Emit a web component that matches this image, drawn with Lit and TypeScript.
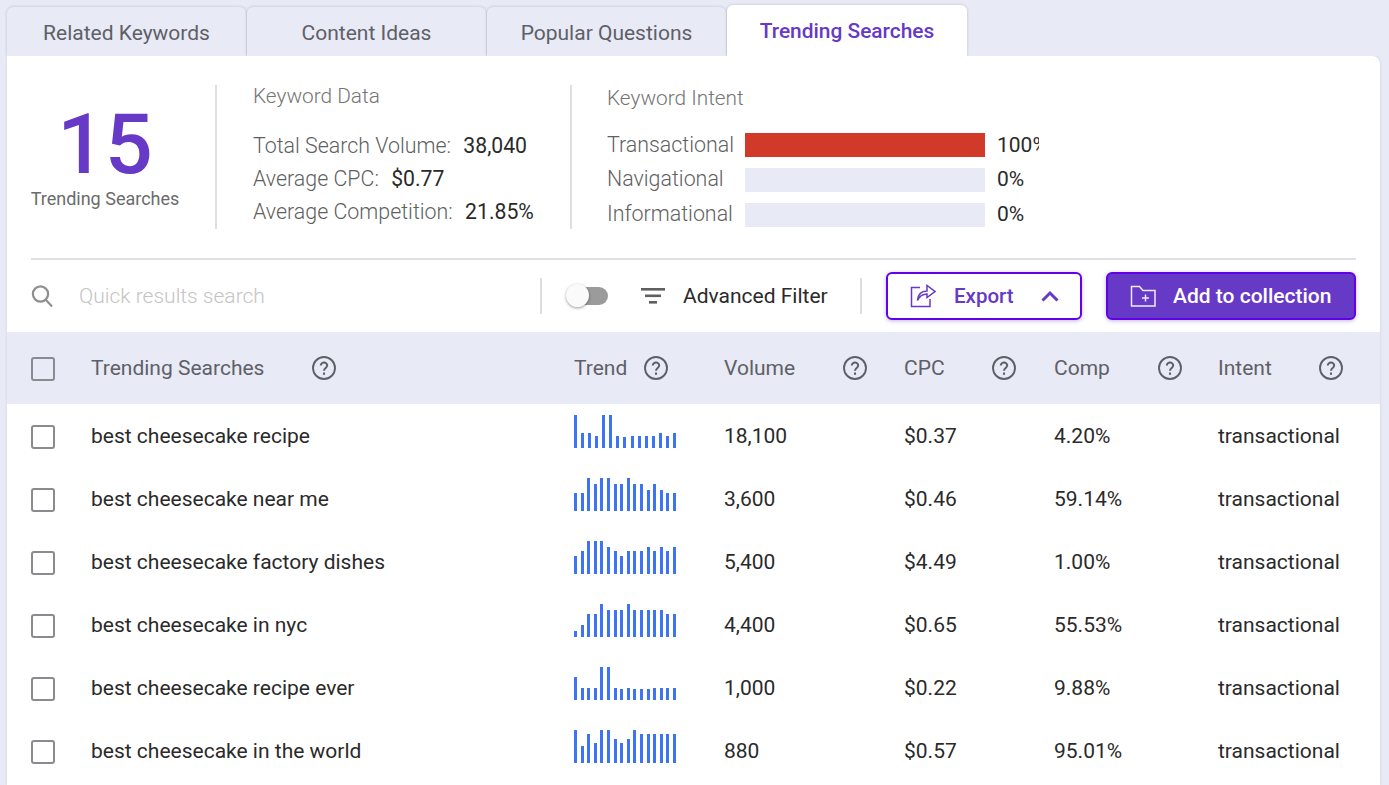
import { LitElement, html, css } from "lit";
import { customElement } from "lit/decorators.js";

const help = html`<svg class="help" viewBox="0 0 24 24" fill="none" stroke="#5f6066" stroke-width="1.9">
  <circle cx="12" cy="12" r="11"></circle>
  <path d="M8.8 9.6a3.2 3.2 0 0 1 6.4 0c0 2.4-3.2 2.500-3.2 5.200" stroke-width="2"></path>
  <path d="M12 16.500v2.300" stroke-width="2.100"></path>
</svg>`;

const rows = [
  { k: "best cheesecake recipe", v: "18,100", c: "$0.37", p: "4.20%", b: [33, 15, 15, 12, 33, 33, 12, 11, 12, 12, 12, 12, 15, 12, 15] },
  { k: "best cheesecake near me", v: "3,600", c: "$0.46", p: "59.14%", b: [18, 18, 33, 27, 33, 33, 27, 27, 33, 27, 27, 21, 27, 21, 18, 18] },
  { k: "best cheesecake factory dishes", v: "5,400", c: "$4.49", p: "1.00%", b: [18, 23, 33, 33, 33, 27, 23, 18, 23, 23, 23, 27, 23, 27, 23, 27] },
  { k: "best cheesecake in nyc", v: "4,400", c: "$0.65", p: "55.53%", b: [6, 12, 23, 23, 33, 27, 27, 27, 33, 27, 27, 27, 27, 27, 23, 23] },
  { k: "best cheesecake recipe ever", v: "1,000", c: "$0.22", p: "9.88%", b: [23, 12, 12, 12, 33, 33, 12, 11, 12, 11, 11, 11, 12, 12, 12, 12] },
  { k: "best cheesecake in the world", v: "880", c: "$0.57", p: "95.01%", b: [33, 17, 29, 20, 33, 33, 24, 20, 24, 33, 29, 29, 29, 29, 29, 29] },
];

@customElement("app-root")
export class AppRoot extends LitElement {
  static styles = css`
    :host { display: block; height: 785px; overflow: hidden; background: #e8eaf6; padding: 5px 9px 0 7px; box-sizing: border-box; font-family: Roboto, sans-serif; color: #2a2a2a; font-size: 21px; }
    .tabs { display: flex; align-items: flex-end; gap: 1px; height: 51px; }
    .tab { width: 239px; height: 49px; box-sizing: border-box; padding-top: 3px; display: flex; justify-content: center; align-items: center; background: #e8eaf6; color: #5f6066; border-radius: 6px 6px 0 0; box-shadow: 0 0 3px rgba(60,60,90,.25); clip-path: inset(-4px -4px 0 -4px); font-size: 21px; }
    .tab.on { width: 240px; height: 51px; padding-top: 0; background: #fff; color: #6639c6; font-weight: 500; font-size: 20.900px; }
    .card { background: #fff; height: 729px; border-top-right-radius: 8px; box-shadow: 0 0 3px rgba(60,60,90,.15); clip-path: inset(0 -4px 0 -4px); }
    .stats { display: flex; height: 202px; padding: 29px 24px 0 0; box-sizing: border-box; }
    .total { width: 208px; padding-right: 12px; box-sizing: border-box; height: 144px; display: flex; flex-direction: column; align-items: center; color: #6b6b6b; font-size: 18px; }
    .div { width: 2px; height: 144px; background: #dfdfdf; flex: none; }
    .num { font-size: 84px; line-height: 84px; color: #6639c6; font-weight: 500; margin-top: 18px; margin-bottom: 1px; }
    .kd { width: 281px; padding: 0 36px; height: 144px; color: #5f5f5f; flex: none; }
    .ttl { color: #757575; font-weight: 300; font-size: 20.800px; line-height: 24px; }
    .kd .ttl { margin-top: -1px; margin-bottom: 21px; }
    .sv { line-height: 33px; height: 33px; white-space: nowrap; font-weight: 300; font-size: 21.400px; }
    .sv b { font-weight: 400; color: #2a2a2a; margin-left: 7px; font-size: 21.200px; }
    .ki { padding-left: 35px; }
    .ki .ttl { margin-top: 1px; margin-bottom: 23px; }
    .ir { display: flex; align-items: center; height: 24px; margin-bottom: 10.800px; font-weight: 300; color: #5f5f5f; font-size: 21.400px; line-height: 22px; }
    .ir .l { width: 138px; margin-top: -1px; }
    .bar { width: 240px; height: 24px; background: #e8eaf6; }
    .bar.r { background: #d13a28; }
    .ir .p { margin: -1px 0 0 12px; width: 42px; overflow: hidden; white-space: nowrap; font-weight: 400; color: #2a2a2a; font-size: 21px; }
    .hr { height: 2px; background: #dfe0e4; margin: 0 24px; }
    .tool { height: 72px; display: flex; align-items: center; padding: 0 24px; box-sizing: border-box; padding-bottom: 1px; }
    .tool > * { flex: none; }
    .search { width: 22px; height: 24px; }
    .ph { margin-left: 26px; width: 461px; color: #c4c4c4; font-weight: 300; font-size: 21px; }
    .sep { width: 2px; height: 36px; background: #dcdde2; }
    .sw { margin-left: 24px; width: 42px; height: 24px; position: relative; }
    .sw i { position: absolute; left: 3px; right: 0; top: 3px; height: 18px; border-radius: 9px; background: #9b9b9b; }
    .sw u { position: absolute; left: 0; top: 0; width: 23px; height: 23px; border-radius: 50%; background: #fafafa; box-shadow: 0 1px 3px rgba(0,0,0,.4); }
    .fi { margin-left: 33px; width: 24px; height: 16px; }
    .af { margin-left: 18px; width: 177px; font-size: 21px; }
    .btn { height: 48px; box-sizing: border-box; border: 2px solid #6200ea; border-radius: 6px; display: flex; align-items: center; font-weight: 500; box-shadow: 0 1px 4px rgba(60,20,160,.3); }
    .exp { margin-left: 24px; width: 196px; color: #6639c6; background: #fff; padding-left: 22px; font-size: 20.500px; }
    .exp .ic { width: 26px; height: 24px; flex: none; }
    .exp span { margin-left: 18px; width: 87px; }
    .exp .ch { width: 18px; height: 12px; }
    .add { margin-left: 24px; width: 250px; color: #fff; background: #6639c6; padding-left: 22px; font-size: 21px; }
    .add .ic { width: 26px; height: 24px; flex: none; }
    .add span { margin-left: 17px; white-space: nowrap; }
    .thead, .row { display: flex; align-items: center; padding-left: 24px; }
    .thead { height: 72px; background: #e8eaf6; color: #5f6066; }
    .row { height: 63px; }
    .row:first-of-type { margin-top: 1px; }
    .cb { width: 24px; height: 24px; box-sizing: border-box; border: 2px solid #8a8a8f; border-radius: 3px; margin: 2px 36px 0 0; flex: none; }
    .c1 { width: 483px; } .c2 { width: 150px; } .c3 { width: 180px; } .c4 { width: 150px; } .c5 { width: 164px; } .c6 { width: 160px; }
    .cell { display: flex; align-items: center; justify-content: space-between; white-space: nowrap; flex: none; }
    .in { display: flex; align-items: center; justify-content: space-between; }
    .w1 { width: 245px; } .w2 { width: 94px; } .w3 { width: 143px; } .w4 { width: 112px; } .w5 { width: 128px; } .w6 { width: 125px; }
    .help { width: 24px; height: 24px; display: block; }
    .spark { width: 102px; height: 33px; display: flex; align-items: flex-end; justify-content: space-between; margin-top: -8px; }
    .spark i { width: 3px; background: #3d74f5; display: block; }
  `;

  render() {
    return html`
      <div class="tabs">
        <div class="tab">Related Keywords</div>
        <div class="tab">Content Ideas</div>
        <div class="tab">Popular Questions</div>
        <div class="tab on">Trending Searches</div>
      </div>
      <div class="card">
        <div class="stats">
          <div class="total"><div class="num">15</div><div>Trending Searches</div></div>
          <div class="div"></div>
          <div class="kd">
            <div class="ttl">Keyword Data</div>
            <div class="sv">Total Search Volume: <b>38,040</b></div>
            <div class="sv">Average CPC: <b>$0.77</b></div>
            <div class="sv">Average Competition: <b>21.85%</b></div>
          </div>
          <div class="div"></div>
          <div class="ki">
            <div class="ttl">Keyword Intent</div>
            <div class="ir"><div class="l">Transactional</div><div class="bar r"></div><div class="p">100%</div></div>
            <div class="ir"><div class="l">Navigational</div><div class="bar"></div><div class="p">0%</div></div>
            <div class="ir"><div class="l">Informational</div><div class="bar"></div><div class="p">0%</div></div>
          </div>
        </div>
        <div class="hr"></div>
        <div class="tool">
          <svg class="search" viewBox="0 0 22 24" fill="none" stroke="#8f8f8f" stroke-width="2.200"><circle cx="9.500" cy="10" r="7.600"></circle><path d="M15 16l6 6.500"></path></svg>
          <div class="ph">Quick results search</div>
          <div class="sep"></div>
          <div class="sw"><i></i><u></u></div>
          <svg class="fi" viewBox="0 0 24 16" fill="#5f5f5f"><rect x="0" y="0" width="24" height="2.600"></rect><rect x="4" y="6.500" width="16" height="2.600"></rect><rect x="8" y="13" width="8" height="2.600"></rect></svg>
          <div class="af">Advanced Filter</div>
          <div class="sep"></div>
          <div class="btn exp">
            <svg class="ic" viewBox="0 0 26 24" fill="none" stroke="#6639c6" stroke-width="1.500"><path d="M10 3.500H1.500v19H20V15"></path><path d="M7.500 16.500c.5-6 4-9.500 9.500-9.500V1.500L25 7.500 17 13.500V10c-5 0-7.500 2-9.500 6.500z"></path></svg>
            <span>Export</span>
            <svg class="ch" viewBox="0 0 18 12" fill="none" stroke="#6639c6" stroke-width="3"><path d="M1.500 10.500L9 3l7.500 7.500"></path></svg>
          </div>
          <div class="btn add">
            <svg class="ic" viewBox="0 0 26 24" fill="none" stroke="#f1ecfb" stroke-width="1.500"><path d="M1.500 2.500h8l3.500 4h12v15.500H1.500z"></path><path d="M15.500 10.500v7M12 14h7"></path></svg>
            <span>Add to collection</span>
          </div>
        </div>
        <div class="thead">
          <div class="cb"></div>
          <div class="cell c1"><div class="in w1">Trending Searches ${help}</div></div>
          <div class="cell c2"><div class="in w2">Trend ${help}</div></div>
          <div class="cell c3"><div class="in w3">Volume ${help}</div></div>
          <div class="cell c4"><div class="in w4">CPC ${help}</div></div>
          <div class="cell c5"><div class="in w5">Comp ${help}</div></div>
          <div class="cell c6"><div class="in w6">Intent ${help}</div></div>
        </div>
        ${rows.map(
          (r) => html`<div class="row">
            <div class="cb"></div>
            <div class="cell c1">${r.k}</div>
            <div class="cell c2"><div class="spark">${r.b.map((h) => html`<i style="height:${h}px"></i>`)}</div></div>
            <div class="cell c3">${r.v}</div>
            <div class="cell c4">${r.c}</div>
            <div class="cell c5">${r.p}</div>
            <div class="cell c6">transactional</div>
          </div>`
        )}
      </div>
    `;
  }
}
